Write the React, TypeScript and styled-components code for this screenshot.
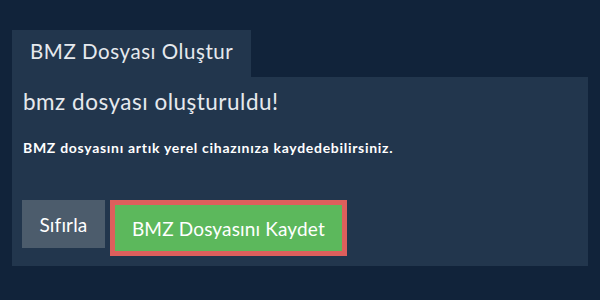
import styled, { createGlobalStyle } from 'styled-components';

const GlobalStyle = createGlobalStyle`
  html, body {
    margin: 0;
    padding: 0;
    background: #11233a;
    font-family: Lato, "Noto Sans", sans-serif;
  }
`

const Page = styled.div`
  width: 600px;
  height: 300px;
  box-sizing: border-box;
  padding: 30px 12px 0 12px;
`

const Tabs = styled.div`
  display: flex;
`

const Tab = styled.div`
  background: #22364d;
  color: #e6e9ee;
  font-size: 20.5px;
  letter-spacing: 0.55px;
  height: 47px;
  box-sizing: border-box;
  display: flex;
  align-items: center;
  padding: 0 18px 6px 18px;
`

const Panel = styled.div`
  background: #22364d;
  height: 189px;
  box-sizing: border-box;
  padding: 11px 10px 0 11px;
`

const Heading = styled.h2`
  margin: 0;
  color: #e6e9ee;
  font-size: 22.5px;
  font-weight: 400;
  letter-spacing: 0.5px;
  line-height: 28px;
`

const Note = styled.p`
  margin: 23px 0 0 0;
  color: #ffffff;
  font-size: 14px;
  font-weight: 700;
  letter-spacing: 0.7px;
  line-height: 17px;
`

const Actions = styled.div`
  display: flex;
  align-items: flex-start;
  gap: 5px;
  margin: 44px 0 0 -1px;
`

const Button = styled.button<{ $primary?: boolean }>`
  font-family: Lato, "Noto Sans", sans-serif;
  font-size: 19px;
  letter-spacing: 0.15px;
  color: #ffffff;
  border: none;
  cursor: pointer;
  height: ${p => (p.$primary ? '56px' : '48px')};
  padding: ${p => (p.$primary ? '0 22px' : '0 17.5px')};
  background: ${p => (p.$primary ? '#5cb85c' : '#4c5c6c')};
  outline: ${p => (p.$primary ? '5px solid #dd5f5c' : 'none')};
  outline-offset: -5px;
`

const App = (): JSX.Element => {
  return (
    <>
      <GlobalStyle />
      <Page>
        <Tabs>
          <Tab>BMZ Dosyası Oluştur</Tab>
        </Tabs>
        <Panel>
          <Heading>bmz dosyası oluşturuldu!</Heading>
          <Note>BMZ dosyasını artık yerel cihazınıza kaydedebilirsiniz.</Note>
          <Actions>
            <Button>Sıfırla</Button>
            <Button $primary>BMZ Dosyasını Kaydet</Button>
          </Actions>
        </Panel>
      </Page>
    </>
  )
}

export default App;
